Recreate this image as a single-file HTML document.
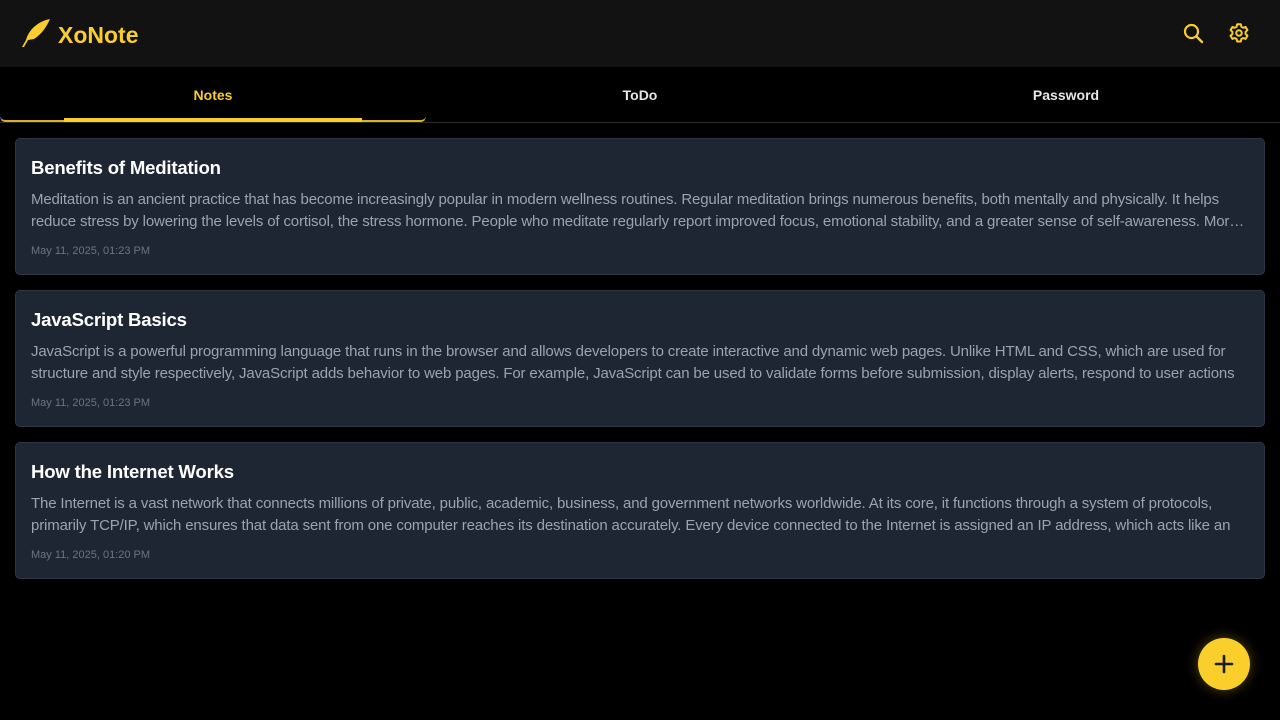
<!DOCTYPE html>
<html><head><meta charset="utf-8"><style>
*{box-sizing:border-box;margin:0;padding:0}
body{width:1280px;height:720px;background:#000;font-family:"Liberation Sans",sans-serif;overflow:hidden;position:relative}
.hdr{height:67px;background:#121212;position:relative}
.logo{position:absolute;left:58px;top:22px;color:#f9cd2e;font-weight:bold;font-size:23px}
.tabs{height:56px;position:relative;border-bottom:1px solid #2a2a2a}
.tab{position:absolute;top:20px;font-size:14px;font-weight:bold;color:#e5e5e5;transform:translateX(-50%)}
.card{position:absolute;left:15px;width:1250px;height:137px;background:#1f2633;border:1px solid #2e3645;border-radius:5px;padding:0 15px}
.card h2{position:absolute;left:15px;top:18px;color:#fff;font-size:18.6px;font-weight:bold;letter-spacing:-0.2px}
.card p{position:absolute;left:15px;right:18px;top:50px;color:#9aa3b0;font-size:15px;line-height:22px;letter-spacing:-0.15px;white-space:nowrap;overflow:hidden}
.card p+p{top:72px;text-overflow:ellipsis}
.card span{position:absolute;left:15px;top:106px;color:#6b7280;font-size:11px}
.fab{position:absolute;left:1198px;top:638px;width:52px;height:52px;border-radius:50%;background:#fbcf2b;box-shadow:0 0 12px rgba(251,207,43,.35)}
</style></head><body>
<div class="hdr">
<svg style="position:absolute;left:20px;top:17px" width="32" height="32" viewBox="20 17 32 32"><path d="M22 47 L26 40 C29 29 39 21 50 19 C47 26 42 34 34 39 L28 40 L24 47 Z" fill="#f9cd2e"/></svg>
<div class="logo">XoNote</div>
<svg style="position:absolute;left:1182px;top:22px" width="22" height="22" viewBox="0 0 22 22"><circle cx="9.5" cy="9.5" r="6.5" stroke="#f9cd2e" stroke-width="2.2" fill="none"/><path d="M14.5 14.5 L20 20" stroke="#f9cd2e" stroke-width="2.4" stroke-linecap="round"/></svg>
<svg style="position:absolute;left:1228px;top:22px" width="22" height="22" viewBox="0 0 24 24" fill="none" stroke="#f9cd2e" stroke-width="2.2"><circle cx="12" cy="12" r="3"/><path d="M10 2.5h4l.6 2.7 2 1.1 2.6-.9 2 3.4-2 1.9v2.4l2 1.9-2 3.4-2.6-.9-2 1.1-.6 2.7h-4l-.6-2.7-2-1.1-2.6.9-2-3.4 2-1.9v-2.4l-2-1.9 2-3.4 2.6.9 2-1.1z" stroke-linejoin="round"/></svg>
</div>
<div class="tabs">
<div class="tab" style="left:213px;color:#f9cd2e">Notes</div>
<div class="tab" style="left:640px">ToDo</div>
<div class="tab" style="left:1066px">Password</div>
<div style="position:absolute;left:0;top:50px;width:426px;height:5px;border-bottom:2px solid #d9b02a;border-left:1px solid #555;border-right:1px solid #555;border-radius:0 0 6px 6px"></div>
<div style="position:absolute;left:64px;top:51px;width:298px;height:4px;background:#f9cd2e"></div>
</div>
<div class="card" style="top:138px"><h2>Benefits of Meditation</h2><p>Meditation is an ancient practice that has become increasingly popular in modern wellness routines. Regular meditation brings numerous benefits, both mentally and physically. It helps</p><p>reduce stress by lowering the levels of cortisol, the stress hormone. People who meditate regularly report improved focus, emotional stability, and a greater sense of self-awareness. More text here</p><span>May 11, 2025, 01:23 PM</span></div>
<div class="card" style="top:290px"><h2>JavaScript Basics</h2><p>JavaScript is a powerful programming language that runs in the browser and allows developers to create interactive and dynamic web pages. Unlike HTML and CSS, which are used for</p><p>structure and style respectively, JavaScript adds behavior to web pages. For example, JavaScript can be used to validate forms before submission, display alerts, respond to user actions</p><span>May 11, 2025, 01:23 PM</span></div>
<div class="card" style="top:442px"><h2>How the Internet Works</h2><p>The Internet is a vast network that connects millions of private, public, academic, business, and government networks worldwide. At its core, it functions through a system of protocols,</p><p>primarily TCP/IP, which ensures that data sent from one computer reaches its destination accurately. Every device connected to the Internet is assigned an IP address, which acts like an</p><span>May 11, 2025, 01:20 PM</span></div>
<div class="fab"><svg width="52" height="52" viewBox="0 0 52 52"><path d="M26 18v16M18 26h16" stroke="#1a1a1a" stroke-width="2.6" stroke-linecap="round"/></svg></div>
</body></html>
